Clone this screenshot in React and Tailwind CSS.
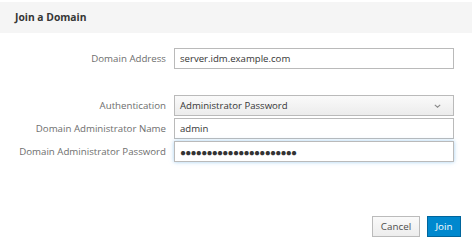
import React from "react";

const font = { fontFamily: '"Open Sans", "Liberation Sans", sans-serif' };

function Label({ children }) {
  return (
    <div className="flex items-center justify-end whitespace-nowrap text-[9.7px] leading-none text-[#6e6e6e]">
      {children}
    </div>
  );
}

function Field({ children, className = "" }) {
  return (
    <div
      className={
        "h-[21px] border border-[#bababa] bg-white flex items-center pl-[5px] text-[9.6px] text-[#363636] leading-none " +
        className
      }
    >
      {children}
    </div>
  );
}

export default function App() {
  return (
    <div className="w-[474px] h-[248px] bg-white relative overflow-hidden" style={font}>
      <div className="mt-[2px] h-[31px] w-[472px] bg-[#f5f5f5] flex items-center pl-[15px]">
        <span className="text-[10.3px] font-bold text-[#363636]">Join a Domain</span>
      </div>

      <div className="mt-[15px] grid grid-cols-[166px_280px] gap-x-[8px]">
        <Label>Domain Address</Label>
        <Field>server.idm.example.com</Field>

        <div className="col-span-2 h-[26px]" />

        <Label>Authentication</Label>
        <Field className="bg-gradient-to-b from-[#fafafa] to-[#ececec] justify-between pr-[12px]">
          <span>Administrator Password</span>
          <svg width="7" height="4" viewBox="0 0 7 4" fill="none">
            <path d="M0.8 0.8l2.7 2.4 2.7-2.4" stroke="#8a8a8a" strokeWidth="1.1" />
          </svg>
        </Field>

        <div className="col-span-2 h-[2px]" />

        <Label>Domain Administrator Name</Label>
        <Field>admin</Field>

        <div className="col-span-2 h-[2px]" />

        <Label>Domain Administrator Password</Label>
        <Field className="border-[#67b1e0] shadow-[0_0_4px_rgba(102,175,233,0.6)]">
          <span className="text-[10px] tracking-[-0.75px] text-[#333]">
            {"●".repeat(22)}
          </span>
        </Field>
      </div>

      <div className="absolute left-0 right-0 top-[216px] flex justify-end gap-[7px] pr-[13px]">
        <button className="h-[21px] w-[48px] border border-[#bbbbbb] bg-gradient-to-b from-[#fafafa] to-[#ededed] text-[9.8px] text-[#4d4d4d] leading-none">
          Cancel
        </button>
        <button className="h-[21px] w-[34px] border border-[#00659c] bg-[#0088ce] text-[9.8px] text-white leading-none">
          Join
        </button>
      </div>
    </div>
  );
}
